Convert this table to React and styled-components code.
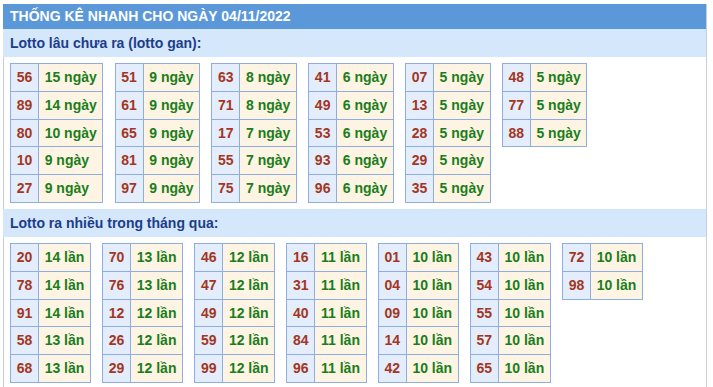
import React from "react";
import styled, { createGlobalStyle } from "styled-components";

const Global = createGlobalStyle`
  html, body { margin: 0; padding: 0; background: #ffffff; }
  body { font-family: "Liberation Sans", Arial, sans-serif; }
`;

const Page = styled.div`
  padding: 4px 0 0 3px;
`;

const Panel = styled.div`
  width: 702px;
  border-right: 1px solid #c6ccd8;
  border-left: 1px solid #c6ccd8;
  padding-bottom: 2px;
`;

const Title = styled.div`
  margin-left: -1px;
  height: 25px;
  line-height: 25px;
  padding-left: 7px;
  background: #5b98d9;
  color: #ffffff;
  font-weight: bold;
  font-size: 14px;
  white-space: nowrap;
`;

const SubTitle = styled.div`
  margin-left: -1px;
  height: 28px;
  line-height: 28px;
  padding-left: 7px;
  background: #d5e7fa;
  color: #1c3d8c;
  font-weight: bold;
  font-size: 14px;
`;

const Tables = styled.div`
  display: flex;
  flex-wrap: wrap;
  align-items: flex-start;
  gap: 11.1px;
  padding: 6px 0 6px 6px;
`;

const Table = styled.table`
  border-collapse: collapse;
  font-size: 14px;
  font-weight: bold;
`;

const Cell = styled.td`
  border: 1px solid #8eaee2;
  line-height: 26.8px;
  height: 26.8px;
  padding: 0 5.7px;
  white-space: nowrap;
  text-align: left;
  background: ${(p) => (p.$num ? "#e3edfb" : "#fdf4e3")};
  color: ${(p) => (p.$num ? "#a3361f" : "#1b7d1b")};
`;

const gan = [
  [["56", 15], ["89", 14], ["80", 10], ["10", 9], ["27", 9]],
  [["51", 9], ["61", 9], ["65", 9], ["81", 9], ["97", 9]],
  [["63", 8], ["71", 8], ["17", 7], ["55", 7], ["75", 7]],
  [["41", 6], ["49", 6], ["53", 6], ["93", 6], ["96", 6]],
  [["07", 5], ["13", 5], ["28", 5], ["29", 5], ["35", 5]],
  [["48", 5], ["77", 5], ["88", 5]],
];

const nhieu = [
  [["20", 14], ["78", 14], ["91", 14], ["58", 13], ["68", 13]],
  [["70", 13], ["76", 13], ["12", 12], ["26", 12], ["29", 12]],
  [["46", 12], ["47", 12], ["49", 12], ["59", 12], ["99", 12]],
  [["16", 11], ["31", 11], ["40", 11], ["84", 11], ["96", 11]],
  [["01", 10], ["04", 10], ["09", 10], ["14", 10], ["42", 10]],
  [["43", 10], ["54", 10], ["55", 10], ["57", 10], ["65", 10]],
  [["72", 10], ["98", 10]],
];

function Group({ data, unit }) {
  return (
    <Tables>
      {data.map((col, i) => (
        <Table key={i}>
          <tbody>
            {col.map(([n, c]) => (
              <tr key={n}>
                <Cell $num>{n}</Cell>
                <Cell>
                  {c} {unit}
                </Cell>
              </tr>
            ))}
          </tbody>
        </Table>
      ))}
    </Tables>
  );
}

export default function App() {
  return (
    <Page>
      <Global />
      <Panel>
        <Title>THỐNG KÊ NHANH CHO NGÀY 04/11/2022</Title>
        <SubTitle>Lotto lâu chưa ra (lotto gan):</SubTitle>
        <Group data={gan} unit="ngày" />
        <SubTitle>Lotto ra nhiều trong tháng qua:</SubTitle>
        <Group data={nhieu} unit="lần" />
      </Panel>
    </Page>
  );
}
